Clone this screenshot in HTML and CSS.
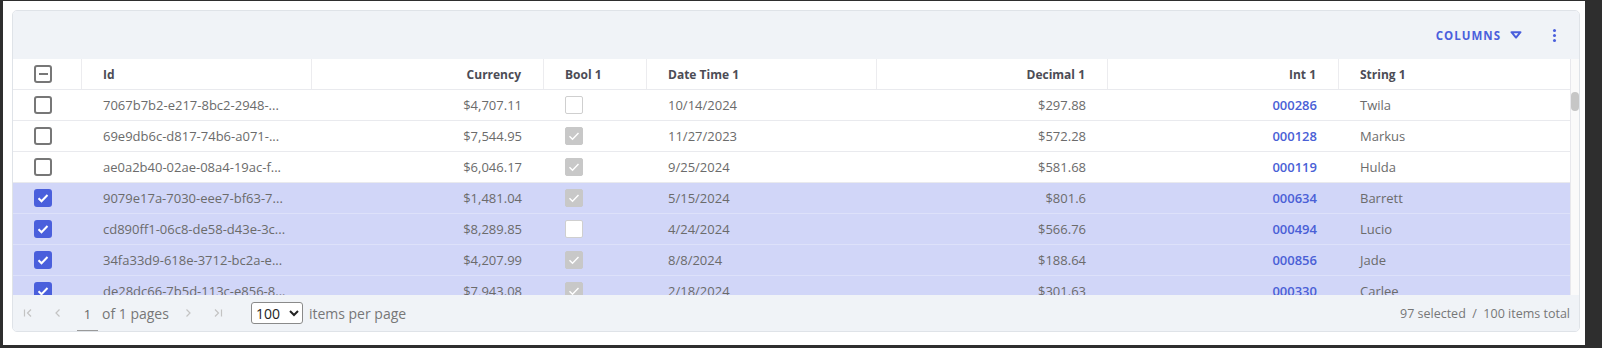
FILE: index.html
```html
<!DOCTYPE html>
<html lang="en">
<head>
  <meta charset="UTF-8" />
  <title>Grid</title>
  <link rel="stylesheet" href="styles.css">
</head>
<body>

  <!-- grid card -->
  <div class="grid-card">

    <!-- toolbar -->
    <div class="toolbar">
      <button class="columns-btn">
        COLUMNS
        <svg width="12" height="8" viewBox="0 0 12 8"><path d="M1.5 1.2h9L6 6.6z" fill="none" stroke="#4a5fdc" stroke-width="2" stroke-linejoin="round"/></svg>
      </button>
      <button class="kebab">
        <span></span><span></span><span></span>
      </button>
    </div>

    <div class="grid-main">
      <div class="grid-area">

        <!-- header -->
        <div class="row head">
          <div class="cell cb"><span class="box indeterminate"><i></i></span></div>
          <div class="cell">Id</div>
          <div class="cell num">Currency</div>
          <div class="cell">Bool 1</div>
          <div class="cell">Date Time 1</div>
          <div class="cell num">Decimal 1</div>
          <div class="cell num">Int 1</div>
          <div class="cell last">String 1</div>
        </div>

        <!-- rows -->
        <div class="rows">
          <div class="row">
            <div class="cell cb"><span class="box"></span></div>
            <div class="cell">7067b7b2-e217-8bc2-2948-...</div>
            <div class="cell num">$4,707.11</div>
            <div class="cell"><span class="bool"></span></div>
            <div class="cell">10/14/2024</div>
            <div class="cell num">$297.88</div>
            <div class="cell num link">000286</div>
            <div class="cell">Twila</div>
          </div>
          <div class="row">
            <div class="cell cb"><span class="box"></span></div>
            <div class="cell">69e9db6c-d817-74b6-a071-...</div>
            <div class="cell num">$7,544.95</div>
            <div class="cell"><span class="bool on"><svg width="12" height="10" viewBox="0 0 12 10"><path d="M1.5 5.2l3 3L10.5 2" fill="none" stroke="#fff" stroke-width="1.4"/></svg></span></div>
            <div class="cell">11/27/2023</div>
            <div class="cell num">$572.28</div>
            <div class="cell num link">000128</div>
            <div class="cell">Markus</div>
          </div>
          <div class="row">
            <div class="cell cb"><span class="box"></span></div>
            <div class="cell">ae0a2b40-02ae-08a4-19ac-f...</div>
            <div class="cell num">$6,046.17</div>
            <div class="cell"><span class="bool on"><svg width="12" height="10" viewBox="0 0 12 10"><path d="M1.5 5.2l3 3L10.5 2" fill="none" stroke="#fff" stroke-width="1.4"/></svg></span></div>
            <div class="cell">9/25/2024</div>
            <div class="cell num">$581.68</div>
            <div class="cell num link">000119</div>
            <div class="cell">Hulda</div>
          </div>
          <div class="row selected">
            <div class="cell cb"><span class="box checked"><svg width="12" height="10" viewBox="0 0 12 10"><path d="M1.5 5.2l3 3L10.5 2" fill="none" stroke="#fff" stroke-width="2"/></svg></span></div>
            <div class="cell">9079e17a-7030-eee7-bf63-7...</div>
            <div class="cell num">$1,481.04</div>
            <div class="cell"><span class="bool on"><svg width="12" height="10" viewBox="0 0 12 10"><path d="M1.5 5.2l3 3L10.5 2" fill="none" stroke="#fff" stroke-width="1.4"/></svg></span></div>
            <div class="cell">5/15/2024</div>
            <div class="cell num">$801.6</div>
            <div class="cell num link">000634</div>
            <div class="cell">Barrett</div>
          </div>
          <div class="row selected">
            <div class="cell cb"><span class="box checked"><svg width="12" height="10" viewBox="0 0 12 10"><path d="M1.5 5.2l3 3L10.5 2" fill="none" stroke="#fff" stroke-width="2"/></svg></span></div>
            <div class="cell">cd890ff1-06c8-de58-d43e-3c...</div>
            <div class="cell num">$8,289.85</div>
            <div class="cell"><span class="bool"></span></div>
            <div class="cell">4/24/2024</div>
            <div class="cell num">$566.76</div>
            <div class="cell num link">000494</div>
            <div class="cell">Lucio</div>
          </div>
          <div class="row selected">
            <div class="cell cb"><span class="box checked"><svg width="12" height="10" viewBox="0 0 12 10"><path d="M1.5 5.2l3 3L10.5 2" fill="none" stroke="#fff" stroke-width="2"/></svg></span></div>
            <div class="cell">34fa33d9-618e-3712-bc2a-e...</div>
            <div class="cell num">$4,207.99</div>
            <div class="cell"><span class="bool on"><svg width="12" height="10" viewBox="0 0 12 10"><path d="M1.5 5.2l3 3L10.5 2" fill="none" stroke="#fff" stroke-width="1.4"/></svg></span></div>
            <div class="cell">8/8/2024</div>
            <div class="cell num">$188.64</div>
            <div class="cell num link">000856</div>
            <div class="cell">Jade</div>
          </div>
          <div class="row selected">
            <div class="cell cb"><span class="box checked"><svg width="12" height="10" viewBox="0 0 12 10"><path d="M1.5 5.2l3 3L10.5 2" fill="none" stroke="#fff" stroke-width="2"/></svg></span></div>
            <div class="cell">de28dc66-7b5d-113c-e856-8...</div>
            <div class="cell num">$7,943.08</div>
            <div class="cell"><span class="bool on"><svg width="12" height="10" viewBox="0 0 12 10"><path d="M1.5 5.2l3 3L10.5 2" fill="none" stroke="#fff" stroke-width="1.4"/></svg></span></div>
            <div class="cell">2/18/2024</div>
            <div class="cell num">$301.63</div>
            <div class="cell num link">000330</div>
            <div class="cell">Carlee</div>
          </div>
        </div>
      </div>

      <!-- scrollbar -->
      <div class="scroll-track">
        <div class="scroll-thumb"></div>
      </div>
    </div>

    <!-- footer / pager -->
    <div class="footer">
      <div class="pager">
        <span class="pg-btn"><svg width="10" height="10" viewBox="0 0 10 10"><path d="M1.5 1.5v7M8 1.5L4.5 5 8 8.5" fill="none" stroke="#c3c3c3" stroke-width="1.2"/></svg></span>
        <span class="pg-btn"><svg width="10" height="10" viewBox="0 0 10 10"><path d="M6.5 1.5L3 5l3.5 3.5" fill="none" stroke="#c3c3c3" stroke-width="1.2"/></svg></span>
        <input class="page-input" type="text" value="1">
        <span class="pg-text">of 1 pages</span>
        <span class="pg-btn"><svg width="10" height="10" viewBox="0 0 10 10"><path d="M3.5 1.5L7 5 3.5 8.5" fill="none" stroke="#c3c3c3" stroke-width="1.2"/></svg></span>
        <span class="pg-btn"><svg width="10" height="10" viewBox="0 0 10 10"><path d="M2 1.5L5.5 5 2 8.5M8.5 1.5v7" fill="none" stroke="#c3c3c3" stroke-width="1.2"/></svg></span>
        <select class="per-page">
          <option>100</option>
        </select>
        <span class="pg-text">items per page</span>
      </div>
      <div class="summary">97 selected &nbsp;/&nbsp; 100 items total</div>
    </div>

  </div>

</body>
</html>
```

FILE: styles.css
```css
/* base */
* {
  box-sizing: border-box;
}
html {
  background: #fff;
}
body {
  margin: 0;
  height: 348px;
  font-family: "Open Sans", "Liberation Sans", sans-serif;
  color: #6b6b6b;
  border-style: solid;
  border-color: #2e2e2e;
  border-width: 1px 17px 3px 3px;
  overflow: hidden;
}

/* card */
.grid-card {
  margin: 9px 5px 0 9px;
  border: 1px solid #dfe3e8;
  border-radius: 5px;
  overflow: hidden;
  background: #fff;
}

/* toolbar */
.toolbar {
  height: 48px;
  background: #f0f3f7;
  display: flex;
  justify-content: flex-end;
  align-items: center;
  padding-right: 13px;
  gap: 20px;
}
.columns-btn {
  border: none;
  background: none;
  padding: 0;
  display: flex;
  align-items: center;
  gap: 9px;
  font-family: inherit;
  font-size: 11.5px;
  font-weight: 700;
  letter-spacing: 1px;
  color: #4a5fdc;
}
.kebab {
  border: none;
  background: none;
  width: 24px;
  height: 24px;
  padding: 0;
  display: flex;
  flex-direction: column;
  align-items: center;
  justify-content: center;
  gap: 2px;
}
.kebab span {
  width: 3px;
  height: 3px;
  border-radius: 50%;
  background: #4a5fdc;
}

/* grid */
.grid-main {
  display: flex;
}
.grid-area {
  width: 1557px;
}
.row {
  display: grid;
  grid-template-columns: 69px 230px 232px 103px 230px 231px 231px 231px;
  height: 31px;
  border-bottom: 1px solid #e9eaee;
  background: #fff;
}
.row.selected {
  background: #d1d6f8;
  border-bottom-color: #dde1fa;
}
.cell {
  display: flex;
  align-items: center;
  padding: 0 21px;
  font-size: 13px;
  white-space: nowrap;
  overflow: hidden;
}
.cell.num {
  justify-content: flex-end;
  padding-right: 22px;
}
.cell.link {
  color: #4a5fd6;
  font-weight: 600;
}
.head .cell {
  font-size: 12px;
  font-weight: 700;
  color: #4c4c55;
  border-right: 1px solid #ececef;
}
.head .cell.last {
  border-right: none;
}
.rows {
  height: 205px;
  overflow: hidden;
}

/* checkboxes */
.box {
  width: 18px;
  height: 18px;
  border: 2px solid #777;
  border-radius: 3px;
  display: flex;
  align-items: center;
  justify-content: center;
}
.box.indeterminate i {
  width: 9px;
  height: 2px;
  background: #777;
}
.box.checked {
  background: #4a5fdc;
  border-color: #4a5fdc;
}
.bool {
  width: 18px;
  height: 18px;
  border: 1.5px solid #cfcfcf;
  border-radius: 2px;
  background: #fff;
  display: flex;
  align-items: center;
  justify-content: center;
}
.bool.on {
  background: #c8c8c8;
  border-color: #c8c8c8;
}

/* scrollbar */
.scroll-track {
  width: 9px;
  border-left: 1px solid #e8e8ec;
  background: #fafafa;
  flex: 1;
}
.scroll-thumb {
  width: 8px;
  height: 19px;
  margin-top: 33px;
  border-radius: 4px;
  background: #c6c6c6;
}

/* footer */
.footer {
  height: 36px;
  background: #f0f3f7;
  display: flex;
  justify-content: space-between;
  align-items: center;
  padding: 0 9px 0 0;
  font-size: 14px;
  color: #777;
}
.pager {
  display: flex;
  align-items: center;
}
.pg-btn {
  width: 30px;
  height: 24px;
  display: flex;
  align-items: center;
  justify-content: center;
}
.page-input {
  width: 21px;
  margin: 0 4px 0 4px;
  padding: 0 0 7px;
  border: none;
  border-bottom: 1px solid #9a9a9a;
  background: transparent;
  text-align: center;
  font-family: inherit;
  font-size: 13px;
  color: #666;
  position: relative;
  top: 5px;
}
.pg-text {
  margin-right: 4px;
}
.per-page {
  margin: 0 6px 0 18px;
  width: 52px;
  height: 22px;
  border: 1px solid #8a8a8a;
  border-radius: 3px;
  background: #fff;
  font-family: inherit;
  font-size: 14px;
  color: #222;
}
.summary {
  font-size: 12.5px;
  color: #777;
}
```
